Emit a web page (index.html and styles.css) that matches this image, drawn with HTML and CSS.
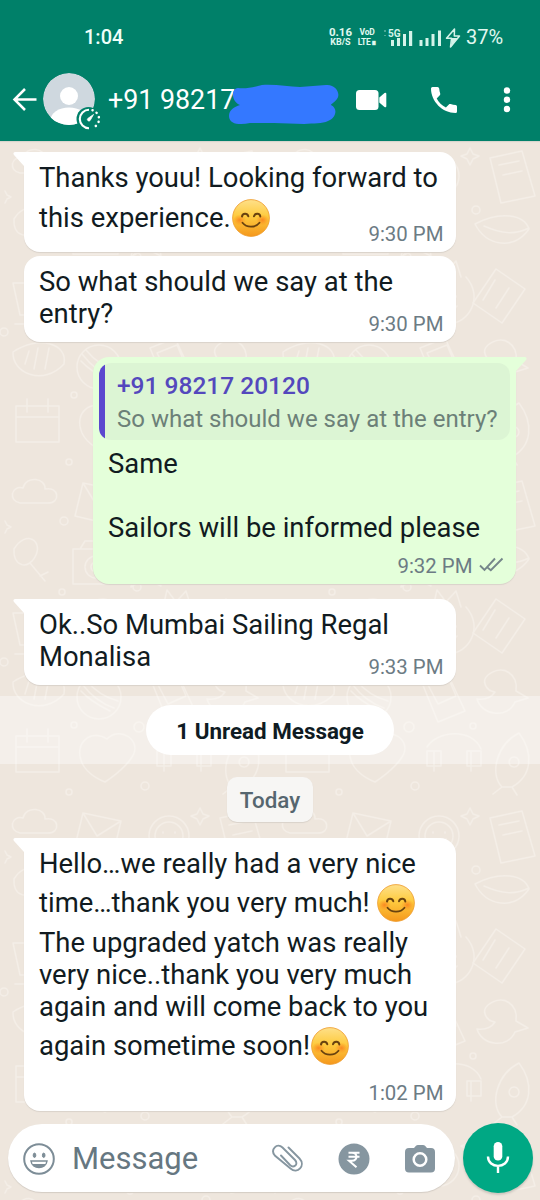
FILE: index.html
```html
<!DOCTYPE html>
<html lang="en">
<head>
<meta charset="utf-8">
<title>Chat</title>
<link rel="stylesheet" href="styles.css">
</head>
<body>
<svg class="defs" width="0" height="0" aria-hidden="true">
  <defs>
    <linearGradient id="face" x1="0" y1="0" x2="0" y2="1">
      <stop offset="0" stop-color="#fee08a"/><stop offset=".45" stop-color="#fecb3f"/><stop offset="1" stop-color="#f5981c"/>
    </linearGradient>
    <radialGradient id="blush"><stop offset="0" stop-color="#fa7a1c" stop-opacity=".8"/><stop offset="1" stop-color="#fa8a1c" stop-opacity="0"/></radialGradient>
    <symbol id="smile" viewBox="0 0 38 38">
      <circle cx="19" cy="19" r="18.4" fill="url(#face)" stroke="#ee9b2c" stroke-width=".8"/>
      <ellipse cx="7.5" cy="21" rx="6.5" ry="5.5" fill="url(#blush)"/><ellipse cx="30.5" cy="21" rx="6.5" ry="5.5" fill="url(#blush)"/>
      <g fill="none" stroke="#69420f" stroke-linecap="round">
        <path stroke-width="2" d="M10 17.500c.5-3.500 5.300-3.800 6.300-.2M22 17.300c1.100-3.600 5.900-3.300 6.300.2"/>
        <path stroke-width="1.800" d="M10.500 23.800c4 5.200 13 5.200 17 0"/>
      </g>
    </symbol>
    <pattern id="doodles" width="270" height="330" patternUnits="userSpaceOnUse">
      <g fill="none" stroke="#f4eee7" stroke-width="1.500" stroke-linecap="round" stroke-linejoin="round">
        <path d="M20 32c-12-2-9-18 3-15 3-13 23-10 22 1 14-3 16 14 3 14z"/>
        <path d="M83 12l38 8-8 34-38-9zM83 12l14 23 24-15"/>
        <circle cx="169" cy="35" r="20"/><circle cx="169" cy="35" r="14"/><path d="M163 31v1M175 31v1M162 38c3 5 11 5 14 0"/>
        <path d="M220 17l32-7 13 45-34 7zM229 24l20-4M233 34l19-4"/>
        <path d="M14 78c12-20 30-8 21 8-6 12-22 11-21-8zM30 92l15 18M40 105l8-4"/>
        <path d="M73 78h45v35H73zM80 78l5-8h18l5 8"/><circle cx="96" cy="96" r="11"/><circle cx="96" cy="96" r="5"/>
        <path d="M145 72l9 13 16 3-12 11 3 16-16-8-14 9 4-17-12-11 16-3z"/>
        <path d="M205 83c25-13 49-10 54 5-15 21-42 18-54-5zM214 85c18 8 31 9 45 2"/>
        <path d="M13 142h35l-4 32H20zM48 149h9c4 16-9 18-11 14M15 183h42"/>
        <path d="M88 134c22-18 41 9 15 22l-17 29M104 155c15-3 24 5 22 18M76 153l13-5"/>
        <path d="M162 132c-18 16-16 45 9 51 27 4 44-26 25-47M164 132l3-13 9 12 10-11 5 16"/><path d="M170 154v1M186 155v1M173 167c6 4 11 2 14-2"/>
        <path d="M226 128l29 20-23 34-29-20zM225 139l-12 20M239 147l-13 20"/>
        <path d="M13 211c25-17 55-9 51 12-20 22-52 10-51-12zM29 210l-4 13M38 207l-4 21M49 207l-4 21"/>
        <circle cx="99" cy="226" r="22"/><path d="M82 213c7 9 17 19 32 24M86 209c8 10 17 17 32 21M81 220c8 9 17 14 29 20"/>
        <path d="M150 207l25-10 20 43-27 11zM157 212l20-8 9 21-18 8z"/>
        <path d="M218 204c15-12 31 0 28 16l12 7-13 4c-7 17-33 14-38-3 8 1 14-1 18-7-9-1-14-11-7-17z"/>
        <path d="M16 265h43v36H16zM16 276h43M27 258v13M48 258v13"/>
        <path d="M82 292c-9-21 10-34 25-24 13-14 36 2 25 18-8 13-27 25-27 25s-17-6-23-19z"/>
        <path d="M157 276c11-17 45-19 54 2M164 280v20M201 280v20M157 280h14v15h-14zM197 280h14v15h-14z"/>
        <path d="M232 316c-13-13-5-43 17-54 15 20 13 43-7 54zM232 316l-9 7M242 316l5 8M244 286a5 5 0 1 0 .1 0"/>
        <circle cx="64" cy="50" r="4"/><circle cx="130" cy="60" r="3"/><circle cx="206" cy="69" r="4"/><circle cx="62" cy="121" r="3"/><circle cx="137" cy="116" r="4"/><circle cx="4" cy="191" r="4"/><circle cx="143" cy="192" r="3"/><circle cx="74" cy="254" r="3"/><circle cx="139" cy="256" r="5"/><circle cx="203" cy="255" r="3"/><circle cx="145" cy="315" r="4"/><circle cx="69" cy="321" r="3"/>
        <path d="M200 7l3 6 6 2-6 3-3 6-3-6-6-3 6-2zM5 50l2 4 4 2-4 2-2 4"/>
      </g>
    </pattern>
  </defs>
</svg>

<main class="phone">
  <svg class="wallpaper" width="540" height="1059" aria-hidden="true"><rect width="540" height="1059" fill="url(#doodles)"/></svg>

  <header class="top">
    <div class="status">
      <span class="clock">1:04</span>
      <span class="speed"><b>0.16</b><b class="unit">KB/S</b></span>
      <span class="volte"><b>VoD</b><b>LTE&#8718;</b></span>
      <svg class="signals" width="78" height="22" viewBox="0 0 78 22" fill="#d5f4ea">
        <path d="M7 14h3v6H7zM13 12h3v8h-3zM19 8h3v12h-3zM25 5h3.200v15H25zM35.500 14h3v6h-3zM41.500 12h3v8h-3zM47.500 8h3v12h-3zM54 4.500h3V20h-3z"/>
        <text class="five" x="4" y="10.500">5G</text><path d="M0 4h2v2H0zM0 9h2v1H0z" opacity=".35"/>
        <path d="M70.500 3l-8 9.300h5L66.500 21 75.500 10h-5.200z" fill="none" stroke="#d5f4ea" stroke-width="1.500" stroke-linejoin="round"/><path d="M67.500 12h6l-6.500 9z"/>
      </svg>
      <span class="battery">37%</span>
    </div>
    <div class="contact">
      <svg class="back" width="26" height="26" viewBox="0 0 26 26" fill="none" stroke="#fff" stroke-width="2.500"><path d="M24.500 12.500H2.800M13 2L2.500 12.500 13 23"/></svg>
      <svg class="avatar" width="60" height="60" viewBox="0 0 60 60">
        <defs><clipPath id="disc"><circle cx="27" cy="27" r="26"/></clipPath></defs>
        <g clip-path="url(#disc)"><circle cx="27" cy="27" r="26" fill="#cfd8df"/><circle cx="27" cy="24" r="9" fill="#fff"/><ellipse cx="27" cy="48" rx="18.500" ry="12.500" fill="#fff"/></g>
        <circle cx="46.500" cy="47" r="12" fill="#008069"/>
        <path d="M47 37.800a9.200 9.200 0 0 0 0 18.400" fill="none" stroke="#fff" stroke-width="2.100"/>
        <path d="M50.500 38.200a9.200 9.200 0 0 1 0 17.600" fill="none" stroke="#fff" stroke-width="2.500" stroke-linecap="round" stroke-dasharray=".1 4.700"/>
        <path d="M51.500 42.500l-3.400 6a1.500 1.500 0 0 1-2.300-2z" fill="#fff" stroke="#fff" stroke-width=".8"/>
      </svg>
      <span class="number">+91 98217</span>
      <svg class="scribble" width="112" height="44" viewBox="0 0 112 44"><path fill="#3478ff" d="M10 7c8 1 16-1 24-3 14-1 26 2 38 2l26-2c10-1 15 9 11 14-2 3-6 5-6 6 8 4 4 14-3 16-6 3-14 2-24 3l-30-1-24 0c-9 2-21 2-21-7 0-6 5-9 11-11-8-3-10-16-2-17z"/></svg>
      <svg class="video" width="32" height="22" viewBox="0 0 32 22" fill="#fff"><rect x="0" y="1" width="22.500" height="20" rx="3.500"/><path d="M23.300 8.500L28.500 4Q30.300 3 30.300 5v12q0 2-1.800 1l-5.200-4.500z"/></svg>
      <svg class="call" width="28" height="28" viewBox="0 0 28 28" fill="#fff"><path d="M2.500 1h5Q9 1 9.200 2.500c.2 2 .5 3.600 1 5.100.2.700.1 1.200-.4 1.700L6.700 12.400c2 4 5.200 7 9.200 9.100l3-3c.5-.5 1-.6 1.700-.4 1.700.6 3.300.8 5 .9q1.400.1 1.400 1.500v5q0 1.500-1.500 1.500C12.500 27 1 15.500 1 2.500Q1 1 2.500 1z"/></svg>
      <svg class="more" width="8" height="26" viewBox="0 0 8 26" fill="#fff"><circle cx="4" cy="3.500" r="3.200"/><circle cx="4" cy="12.700" r="3.200"/><circle cx="4" cy="22" r="3.200"/></svg>
    </div>
  </header>

  <section class="chat">
    <article class="bubble in tall first">
      <svg class="tail" width="13" height="15" viewBox="0 0 13 15"><path d="M13 0H2Q-.5.500 1 3l10 11 2 1z" fill="#fff"/></svg>
      <p class="line">Thanks youu! Looking forward to</p>
      <p class="line emo">this experience.<svg class="smile"><use href="#smile"/></svg></p>
      <time>9:30 PM</time>
    </article>
    <article class="bubble in short second">
      <p class="line">So what should we say at the</p>
      <p class="line">entry?</p>
      <time>9:30 PM</time>
    </article>
    <article class="bubble out">
      <svg class="tail" width="13" height="15" viewBox="0 0 13 15"><path d="M0 0h11q2.500.500 1 3L2 14l-2 1z" fill="#e4ffda"/></svg>
      <blockquote><strong>+91 98217 20120</strong><span>So what should we say at the entry?</span></blockquote>
      <p class="line">Same</p>
      <p class="line">&nbsp;</p>
      <p class="line">Sailors will be informed please</p>
      <time>9:32 PM<svg class="ticks" width="25" height="17" viewBox="0 0 25 17" fill="none" stroke="#75868a" stroke-width="1.900"><path d="M1 8.500l4.500 4.500L16 1.500M8.500 10.500l3.300 2.700L23.500 1.500"/></svg></time>
    </article>
    <article class="bubble in short fourth">
      <svg class="tail" width="13" height="15" viewBox="0 0 13 15"><path d="M13 0H2Q-.5.500 1 3l10 11 2 1z" fill="#fff"/></svg>
      <p class="line">Ok..So Mumbai Sailing Regal</p>
      <p class="line">Monalisa</p>
      <time>9:33 PM</time>
    </article>
    <div class="unread"><span>1 Unread Message</span></div>
    <div class="day">Today</div>
    <article class="bubble in last">
      <svg class="tail" width="13" height="15" viewBox="0 0 13 15"><path d="M13 0H2Q-.5.500 1 3l10 11 2 1z" fill="#fff"/></svg>
      <p class="line">Hello…we really had a very nice</p>
      <p class="line emo">time…thank you very much! <svg class="smile"><use href="#smile"/></svg></p>
      <p class="line">The upgraded yatch was really</p>
      <p class="line">very nice..thank you very much</p>
      <p class="line">again and will come back to you</p>
      <p class="line emo">again sometime soon!<svg class="smile"><use href="#smile"/></svg></p>
      <time>1:02 PM</time>
    </article>
  </section>

  <footer class="composer">
    <div class="field">
      <svg class="face" width="32" height="32" viewBox="0 0 32 32" fill="none" stroke="#7d8d97" stroke-width="2"><circle cx="16" cy="16" r="14.800"/><ellipse cx="11.500" cy="12.300" rx="1.300" ry="2.200" fill="#7d8d97" stroke-width="1"/><ellipse cx="20.700" cy="12.300" rx="1.300" ry="2.200" fill="#7d8d97" stroke-width="1"/><path d="M8 18h16c-1 8.500-15 8.500-16 0z" stroke-width="1.500"/><path d="M9 21h14c-3 4.500-11 4.500-14 0z" fill="#7d8d97" stroke="none"/></svg>
      <span class="hint">Message</span>
      <svg class="clip" width="34" height="32" viewBox="0 0 34 32" fill="none" stroke="#8696a0" stroke-width="1.900" stroke-linecap="round"><path d="M17.500 4.500L28.500 15.500c6.500 7-2 16-9 10L3.800 12.500C-1 6.500 6-.5 11.500 4.500L24 17c4 4.500-1.500 8.500-5 5L10 12.500"/></svg>
      <svg class="rupee" width="32" height="32" viewBox="0 0 32 32"><circle cx="16" cy="16" r="15.500" fill="#8696a0"/><path d="M10.500 9.700h11M10.500 13.700h11M10.500 9.700h3.500c6 0 6 8 0 8h-3l7.500 6.500" fill="none" stroke="#fff" stroke-width="2"/></svg>
      <svg class="camera" width="32" height="30" viewBox="0 0 32 30"><path fill="#8696a0" d="M10 4l2-2.200Q12.700 1 14 1h5q1.300 0 2 .8L23 4h4q4 0 4 4v16.500q0 4-4 4H5q-4 0-4-4V8q0-4 4-4z"/><circle cx="16" cy="15.500" r="6.300" fill="none" stroke="#fff" stroke-width="2.500"/></svg>
    </div>
    <div class="mic"><svg width="24" height="34" viewBox="0 0 24 34"><rect x="7.700" y="1" width="8.600" height="18.500" rx="4.300" fill="#fff"/><path d="M2 15.500c0 12.500 20 12.500 20 0M12 24.500V32" fill="none" stroke="#fff" stroke-width="2.400"/></svg></div>
  </footer>
</main>
</body>
</html>
```
FILE: styles.css
```css
* { box-sizing: border-box; }
body { margin: 0; font-family: Roboto, "Liberation Sans", sans-serif; }
p, blockquote { margin: 0; }
svg { display: block; flex: none; }
.defs { position: absolute; }
.phone { position: relative; isolation: isolate; width: 540px; height: 1200px; overflow: hidden; background: #eee6dd; display: flex; flex-direction: column; }
.wallpaper { position: absolute; left: 0; top: 141px; z-index: -1; }

.top { height: 141px; background: #008069; color: #fff; flex: none; box-shadow: 0 1px 1px #d8d6ce; }
.status { height: 58px; padding: 16px 37px 0 84px; display: flex; align-items: center; color: #e0f8f0; white-space: nowrap; }
.clock { font-size: 20px; font-weight: 500; width: 245px; flex: none; color: #effff9; }
.speed, .volte { display: flex; flex-direction: column; align-items: center; flex: none; font-size: 11.5px; line-height: 11px; width: 23px; }
.speed .unit { font-size: 9px; line-height: 9px; }
.volte { width: 18px; margin-left: 6px; font-size: 8.5px; line-height: 10px; letter-spacing: -.3px; }
.signals { margin-left: 8px; overflow: visible; }
.five { font: 700 10px Roboto, sans-serif; }
.battery { font-size: 20px; margin-left: 4px; flex: none; }
.contact { display: flex; align-items: center; height: 83px; padding-left: 12px; }
.avatar { margin-left: 4px; margin-top: 5px; }
.number { margin-left: 6px; width: 120px; margin-top: 1px; font-size: 26.8px; white-space: nowrap; }
.scribble { margin-top: 7px; }
.video { margin-left: 16px; margin-top: 1px; }
.call { margin-left: 42px; margin-top: 1px; }
.more { margin-left: 45px; margin-top: 1px; }

.chat { flex: none; height: 982px; padding: 11px 24px 0; display: flex; flex-direction: column; align-items: flex-start; }
.bubble { position: relative; flex: none; display: flex; flex-direction: column; width: 432px; padding: 10.2px 12.5px 0 15px; border-radius: 16px; background: #fff; color: #111b21; box-shadow: 0 1px 1px #d9d2ca; }
.bubble:has(.tail) { border-top-left-radius: 0; }
.in .tail { position: absolute; left: -11px; top: 0; }
.line { height: 32px; line-height: 32px; font-size: 27.45px; white-space: pre; }
.emo { height: 47px; padding-top: 7.500px; display: flex; }
.smile { width: 38px; height: 38px; margin: -3px 0 0 1px; }
time { align-self: flex-end; font-size: 20.4px; line-height: 24px; color: #6c7b84; }
.tall { height: 100px; }
.tall time { margin-top: -19px; }
.short { height: 85.500px; }
.short time { margin-top: -18.7px; }
.second { margin-top: 4px; }
.out { width: 423px; height: 227px; margin: 15.500px 0 0 69px; padding: 6px 12.5px 0 6px; background: #e4ffda; }
.bubble.out { border-radius: 16px 0 16px 16px; }
.out .tail { position: absolute; right: -11px; top: 0; }
.out .line { padding-left: 9px; }
.out blockquote { width: 411px; height: 77px; margin-bottom: 7.8px; border-radius: 12px; background: linear-gradient(90deg, #5b47cf 6px, #dcf5d4 6px); padding: 9px 0 0 18px; display: flex; flex-direction: column; white-space: nowrap; }
.out strong { font-size: 24.5px; line-height: 28px; font-weight: 500; color: #5448bd; }
.out blockquote span { font-size: 24px; line-height: 28px; margin-top: 5px; color: #6c8078; }
.out time { display: flex; gap: 6px; margin-top: 10.2px; }
.ticks { margin-top: 3px; }
.fourth { margin-top: 15px; }
.unread { margin: 11.500px -24px 0; width: 540px; height: 68px; padding-top: 9px; background: rgba(255,255,255,.38); display: flex; justify-content: center; flex: none; }
.unread span { width: 248px; height: 50px; border-radius: 25px; background: #fff; color: #0f1b23; font-size: 22.4px; line-height: 53px; font-weight: 700; text-align: center; }
.day { align-self: center; flex: none; width: 86px; height: 45px; margin-top: 13px; border-radius: 10px; background: #f7f6f4; box-shadow: 0 1px 1px #d9d2ca; color: #56666f; font-size: 22.4px; font-weight: 500; line-height: 46px; text-align: center; }
.last { height: 273px; margin-top: 15.500px; }
.last time { margin-top: 11.5px; }

.composer { display: flex; flex: none; padding: 0 7px 0 8px; height: 77px; }
.field { flex: none; width: 447px; height: 68px; margin-top: 1px; border-radius: 34px; background: #fff; box-shadow: 0 1px 1px #d3ccc4; display: flex; align-items: center; padding: 1px 0 0 15px; }
.hint { margin-left: 17px; width: 199px; color: #667781; font-size: 31px; }
.rupee { margin-left: 33px; }
.camera { margin-left: 34px; }
.mic { flex: none; width: 70px; height: 70px; margin-left: 8px; border-radius: 50%; background: #00a884; box-shadow: 0 2px 2px #cec7bf; display: flex; align-items: center; justify-content: center; }
```
